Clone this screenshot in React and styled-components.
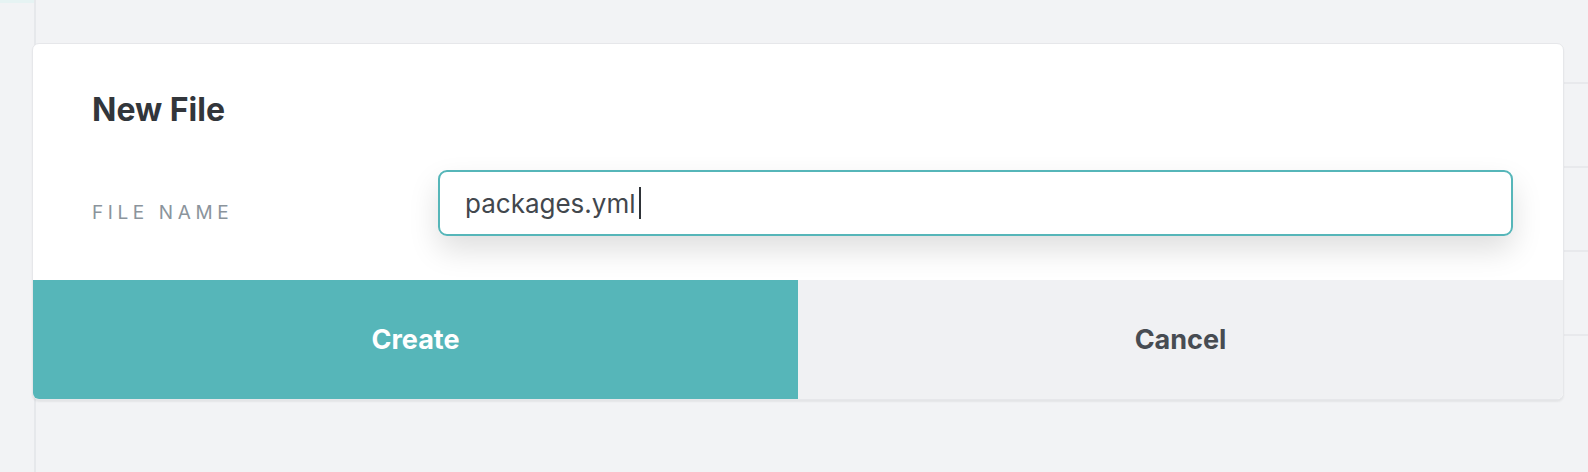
import React from "react";
import styled, {createGlobalStyle} from "styled-components";

const GlobalStyle = createGlobalStyle`
  html, body { margin: 0; padding: 0; }
  body {
    background: #f2f3f5;
    font-family: Inter, "Liberation Sans", sans-serif;
    overflow: hidden;
  }
`;

function App() {
    const rows = [1, 2, 3, 4];
    return (
        <>
            <GlobalStyle/>
            <Page>
                <Sidebar/>
                <Main>
                    <List>
                        {rows.map((r) => <Row key={r}/>)}
                    </List>
                    <Modal>
                        <Body>
                            <Title>New File</Title>
                            <FormRow>
                                <Label>File Name</Label>
                                <Field role="textbox">
                                    packages.yml<Caret/>
                                </Field>
                            </FormRow>
                        </Body>
                        <Footer>
                            <ActionBtn primary>Create</ActionBtn>
                            <ActionBtn>Cancel</ActionBtn>
                        </Footer>
                    </Modal>
                </Main>
            </Page>
        </>
    );
}

export default App;

const Page = styled.div`
display: flex;
width: 1588px;
height: 472px;
`
const Sidebar = styled.div`
width: 34px;
flex-shrink: 0;
border-right: 2px solid #e6e8eb;
background: linear-gradient(#e6f3f3 0, #e6f3f3 3px, #f2f3f5 3px);
`
const Main = styled.div`
position: relative;
flex: 1;
`
const List = styled.div`
display: flex;
flex-direction: column;
`
const Row = styled.div`
height: 82px;
border-bottom: 2px solid #e8e9ec;
`
const Modal = styled.div`
position: absolute;
left: -4px;
top: 43px;
width: 1532px;
box-sizing: border-box;
background: #fff;
border: 1px solid #e6e7ea;
border-radius: 7px;
box-shadow: 0 2px 2px rgba(0, 0, 0, 0.06);
overflow: hidden;
display: flex;
flex-direction: column;
`
const Body = styled.div`
padding: 46px 50px 44px 59px;
`
const Title = styled.h2`
margin: 0;
font-size: 32px;
font-weight: 700;
color: #32363b;
line-height: normal;
`
const FormRow = styled.div`
display: grid;
grid-template-columns: 346px 1fr;
align-items: start;
margin-top: 41px;
`
const Label = styled.div`
padding-top: 31px;
font-size: 19px;
letter-spacing: 4.6px;
text-transform: uppercase;
color: #8b949c;
line-height: normal;
`
const Field = styled.div`
display: flex;
align-items: center;
height: 66px;
box-sizing: border-box;
padding: 0 25px;
border: 2px solid #56b6b9;
border-radius: 9px;
font-size: 26px;
color: #42474d;
box-shadow: 0 14px 30px rgba(0, 0, 0, 0.13);
`
const Caret = styled.span`
display: inline-block;
width: 2px;
height: 32px;
margin-left: 3px;
background: #2f3338;
`
const Footer = styled.div`
display: grid;
grid-template-columns: 1fr 1fr;
height: 119px;
`
const ActionBtn = styled.button`
border: none;
margin: 0;
font-family: Inter, "Liberation Sans", sans-serif;
font-size: 27px;
font-weight: 700;
background: ${(p) => (p.primary ? "#56b6b9" : "#f0f1f3")};
color: ${(p) => (p.primary ? "#ffffff" : "#474c52")};
cursor: pointer;
`
